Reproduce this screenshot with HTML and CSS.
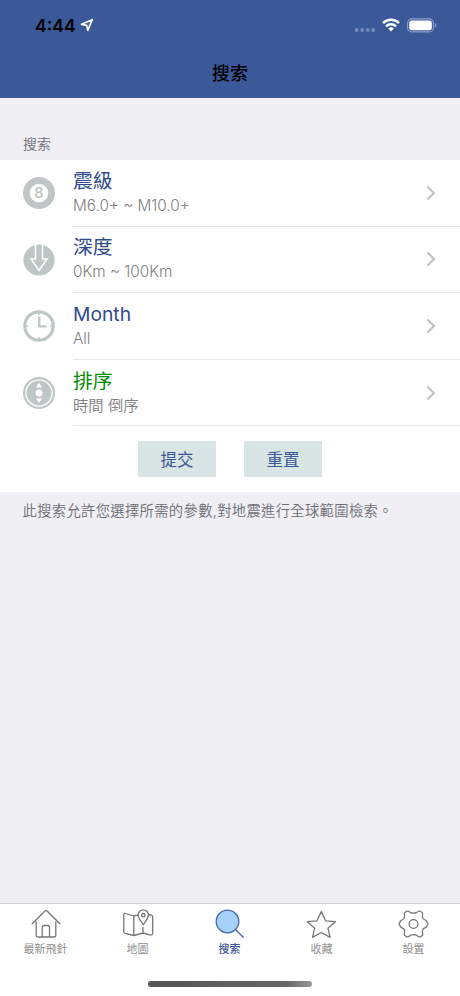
FILE: index.html
```html
<!DOCTYPE html>
<html lang="zh-Hant">
<head>
<meta charset="utf-8">
<meta name="viewport" content="width=device-width, initial-scale=1">
<title>搜索</title>
<link rel="stylesheet" href="styles.css">
</head>
<body>
<div class="app">
  <header class="header">
    <div class="status">
      <span class="time">4:44</span>
      <svg class="location" width="14" height="14" viewBox="0 0 14 14"><path d="M1.500 6.300 12.200 1.700 7.800 12.300 6.700 7.400Z" fill="none" stroke="#fff" stroke-width="1.700" stroke-linejoin="round"/></svg>
      <svg class="signal" width="22" height="6" viewBox="0 0 22 6" fill="#7188bd"><circle cx="2.700" cy="3" r="2"/><circle cx="8.200" cy="3" r="2"/><circle cx="13.700" cy="3" r="2"/><circle cx="19.200" cy="3" r="2"/></svg>
      <svg class="wifi" width="18" height="14" viewBox="0 0 18 14"><g fill="none" stroke="#fff" stroke-width="2.500"><path d="M1 5.100a11.500 11.500 0 0 1 16 0"/><path d="M4 8.300a7.200 7.200 0 0 1 10 0"/></g><path d="M9 13.400 6.200 10.600a4 4 0 0 1 5.600 0Z" fill="#fff"/></svg>
      <svg class="battery" width="30" height="15" viewBox="0 0 30 15"><rect x=".6" y=".9" width="25.800" height="13" rx="4" fill="none" stroke="#8c9fcb" stroke-width="1.100"/><rect x="2.200" y="2.500" width="22.600" height="9.800" rx="2.400" fill="#fff"/><path d="M27.800 5.100c2 .7 2 3.900 0 4.600Z" fill="#8c9fcb"/></svg>
    </div>
    <h1 class="title">搜索</h1>
  </header>
  <main class="content">
    <h2 class="section-title">搜索</h2>
    <section class="panel">
      <div class="row">
        <svg class="row-icon" viewBox="0 0 32 32"><circle cx="16" cy="16" r="16" fill="#bfc6c6"/><circle cx="16" cy="16" r="9.300" fill="#fff"/><text class="ball" x="16" y="21.300">8</text></svg>
        <div class="row-body"><div class="row-text"><div class="name">震級</div><div class="value">M6.0+ ~ M10.0+</div></div>
        <svg class="chevron" viewBox="0 0 10 16"><path d="m1.500 1.500 6.500 6.500-6.500 6.500"/></svg></div>
      </div>
      <div class="row">
        <svg class="row-icon" viewBox="0 0 32 32"><circle cx="16" cy="16" r="15.600" fill="#bfc6c6"/><path d="M12.500 0V15H8L16 26.500 24 15H19.500V0" fill="none" stroke="#fff" stroke-width="1.500"/></svg>
        <div class="row-body"><div class="row-text"><div class="name">深度</div><div class="value">0Km ~ 100Km</div></div>
        <svg class="chevron" viewBox="0 0 10 16"><path d="m1.500 1.500 6.500 6.500-6.500 6.500"/></svg></div>
      </div>
      <div class="row">
        <svg class="row-icon" viewBox="0 0 32 32" fill="none" stroke="#bfc6c6"><circle cx="16" cy="16" r="14.200" stroke-width="3.200"/><path d="M16.300 6.500V16.300H23.500" stroke-width="2.300"/><path d="M16 2V5M16 27V30M2 16H5M27 16H30" stroke-width="1.500"/></svg>
        <div class="row-body"><div class="row-text"><div class="name latin">Month</div><div class="value">All</div></div>
        <svg class="chevron" viewBox="0 0 10 16"><path d="m1.500 1.500 6.500 6.500-6.500 6.500"/></svg></div>
      </div>
      <div class="row">
        <svg class="row-icon" viewBox="0 0 32 32"><circle cx="16" cy="16" r="16" fill="#bfc6c6"/><circle cx="16" cy="16" r="13.100" fill="none" stroke="#fff" stroke-width="1.300"/><circle cx="16" cy="16" r="3.500" fill="#fff"/><path d="M16 5.500 19 10.500H13ZM16 26 19 21.500H13Z" fill="#fff"/></svg>
        <div class="row-body"><div class="row-text"><div class="name green">排序</div><div class="value">時間 倒序</div></div>
        <svg class="chevron" viewBox="0 0 10 16"><path d="m1.500 1.500 6.500 6.500-6.500 6.500"/></svg></div>
      </div>
      <div class="actions"><button type="button">提交</button><button type="button">重置</button></div>
    </section>
    <p class="note">此搜索允許您選擇所需的參數,對地震進行全球範圍檢索。</p>
  </main>
  <nav class="tabs">
    <a class="tab"><svg viewBox="0 0 32 32"><path d="M2.200 15.800 14.700 3.200q1.300-1.200 2.600 0L29.800 15.800M6.200 14V27.500q0 1.500 1.500 1.500H24.300q1.500 0 1.500-1.500V14M12.200 29V19.500q0-2 2-2H17.500q2 0 2 2V29"/></svg><span>最新飛針</span></a>
    <a class="tab"><svg viewBox="0 0 32 32"><path d="M16.500 6.800 11.800 8 3.500 5.500Q1.800 5 1.800 7V23.600q0 1.300 1.200 1.700L11.800 27.500 21 25l6.800 1.800q2.900.5 2.900-1.500V9q0-1.500-1.500-2L26.300 6.500M11.800 8V27.500M21 19.500V25M21.300 16.800C18.500 12.800 16.200 10 16.200 6.900a5.100 5.100 0 0 1 10.200 0C26.400 10 24 12.800 21.300 16.800Z"/><circle cx="21.300" cy="7.200" r="1.700"/></svg><span>地圖</span></a>
    <a class="tab active"><svg viewBox="0 0 32 32"><circle cx="13.500" cy="13.500" r="11.300"/><path d="m21.500 21.500 7.700 7.700"/></svg><span>搜索</span></a>
    <a class="tab"><svg viewBox="0 0 32 32"><path d="m15.300 3.600 4.300 9.200 9.800.9-7.500 6.500 2.200 9.200-8.800-4.900-8.800 4.900 2.200-9.200-7.500-6.500 9.800-.9Z"/></svg><span>收藏</span></a>
    <a class="tab"><svg viewBox="0 0 32 32"><path d="M12.200 4.300 10.200 3.200Q9.200 2.900 8.300 3.500L6.900 4.500Q6.200 5.100 6.400 6.200L6.600 8.800Q6.300 11.300 3.900 12L2.700 12.800 1.300 15.200Q.9 16 1.500 16.900L3 19.300 5.500 20.600Q6.800 21.800 6.600 23.600L6.300 26.400Q6.300 27.400 7.200 27.900L9 28.800Q9.900 29.100 10.700 28.500L12.700 27.200Q15.500 25.900 18.300 27.200L20.300 28.500Q21.100 29.100 22 28.800L23.800 27.900Q24.700 27.400 24.700 26.400L24.400 23.600Q24.200 21.800 25.500 20.600L28 19.300 29.500 16.900Q30.100 16 29.700 15.200L28.300 12.800 27.100 12Q24.700 11.300 24.400 8.800L24.600 6.200Q24.800 5.100 24.100 4.500L22.700 3.500Q21.800 2.900 20.800 3.200L18.800 4.300Q15.500 5.900 12.200 4.300Z"/><circle cx="15.500" cy="16" r="4.400"/></svg><span>設置</span></a>
    <div class="home-bar"></div>
  </nav>
</div>
</body>
</html>
```
FILE: styles.css
```css
* { box-sizing: border-box; }
body {
  margin: 0;
  font-family: Inter, "Noto Sans CJK TC", sans-serif;
  background: #efeff4;
}
.app { display: flex; flex-direction: column; width: 460px; height: 996px; }
.header { height: 98px; flex: none; background: #3b5998; }
.status { display: flex; align-items: center; height: 50px; padding: 0 23px 0 35px; }
.time { font-size: 17.500px; font-weight: 600; line-height: 48px; padding-top: 2px; }
.location { margin-left: 4px; }
.signal { margin: 10px 6px 0 auto; }
.wifi { margin-right: 7px; }
.title {
  margin: 0;
  font-size: 18px;
  line-height: 48px;
  font-weight: 500;
  text-align: center;
}
.content { flex: 1; }
.section-title {
  height: 62px;
  margin: 0;
  padding: 36px 23px 0;
  font-size: 14px;
  line-height: 20px;
  font-weight: 350;
  color: #6d6d72;
}
.panel { background: #fff; height: 332px; }
.row { display: flex; align-items: center; height: 66.600px; padding-left: 23px; }
.row-icon { width: 32px; height: 32px; margin-right: 18px; }
.ball {
  font: 600 14.500px Inter, sans-serif;
  fill: #bfc6c6;
  text-anchor: middle;
}
.row-body {
  flex: 1;
  display: flex;
  align-items: center;
  justify-content: space-between;
  height: 100%;
  padding-right: 24px;
  border-bottom: 1px solid #e5e5e7;
}
.row-text { padding-bottom: 2px; }
.name { font-size: 19.800px; line-height: 28px; color: #2f4b8c; }
.name.latin { font-size: 19.300px; }
.name.green { color: #008a00; }
.value { font-size: 15.300px; line-height: 22px; color: #808080; font-weight: 350; }
.chevron { width: 10px; height: 16px; fill: none; stroke: #bfbfc3; stroke-width: 2; }
.actions { display: flex; justify-content: center; gap: 28px; padding-top: 15px; }
.actions button {
  width: 78px;
  height: 36px;
  padding: 0;
  border: 0;
  background: #d9e5e5;
  color: #3b5998;
  font: 16.500px/36px Inter, "Noto Sans CJK TC", sans-serif;
  padding-top: 1px;
}
.note {
  margin: 0;
  padding: 9px 22.500px;
  font-size: 14.300px;
  line-height: 20px;
  font-weight: 350;
  letter-spacing: .34px;
  color: #6d6d72;
  white-space: nowrap;
}
.tabs {
  position: relative;
  display: flex;
  height: 93px;
  border-top: 1px solid #d0d0d4;
  background: #fff;
}
.tab { flex: 1; display: flex; flex-direction: column; align-items: center; padding-top: 4px; color: #8e8e8e; }
.tab svg { width: 32px; height: 32px; fill: none; stroke: #777; stroke-width: 1.300; stroke-linejoin: round; stroke-linecap: round; }
.tab span { font-size: 11px; line-height: 18px; margin-right: 1px; }
.tab.active { color: #3b5998; font-weight: 500; }
.tab.active svg { stroke: #4766a5; }
.tab.active circle { fill: #a7d1fb; }
.home-bar {
  position: absolute;
  left: 148px;
  bottom: 9px;
  width: 164px;
  height: 6px;
  border-radius: 3px;
  background: linear-gradient(90deg, #555, #666 84%, #999);
}
```
